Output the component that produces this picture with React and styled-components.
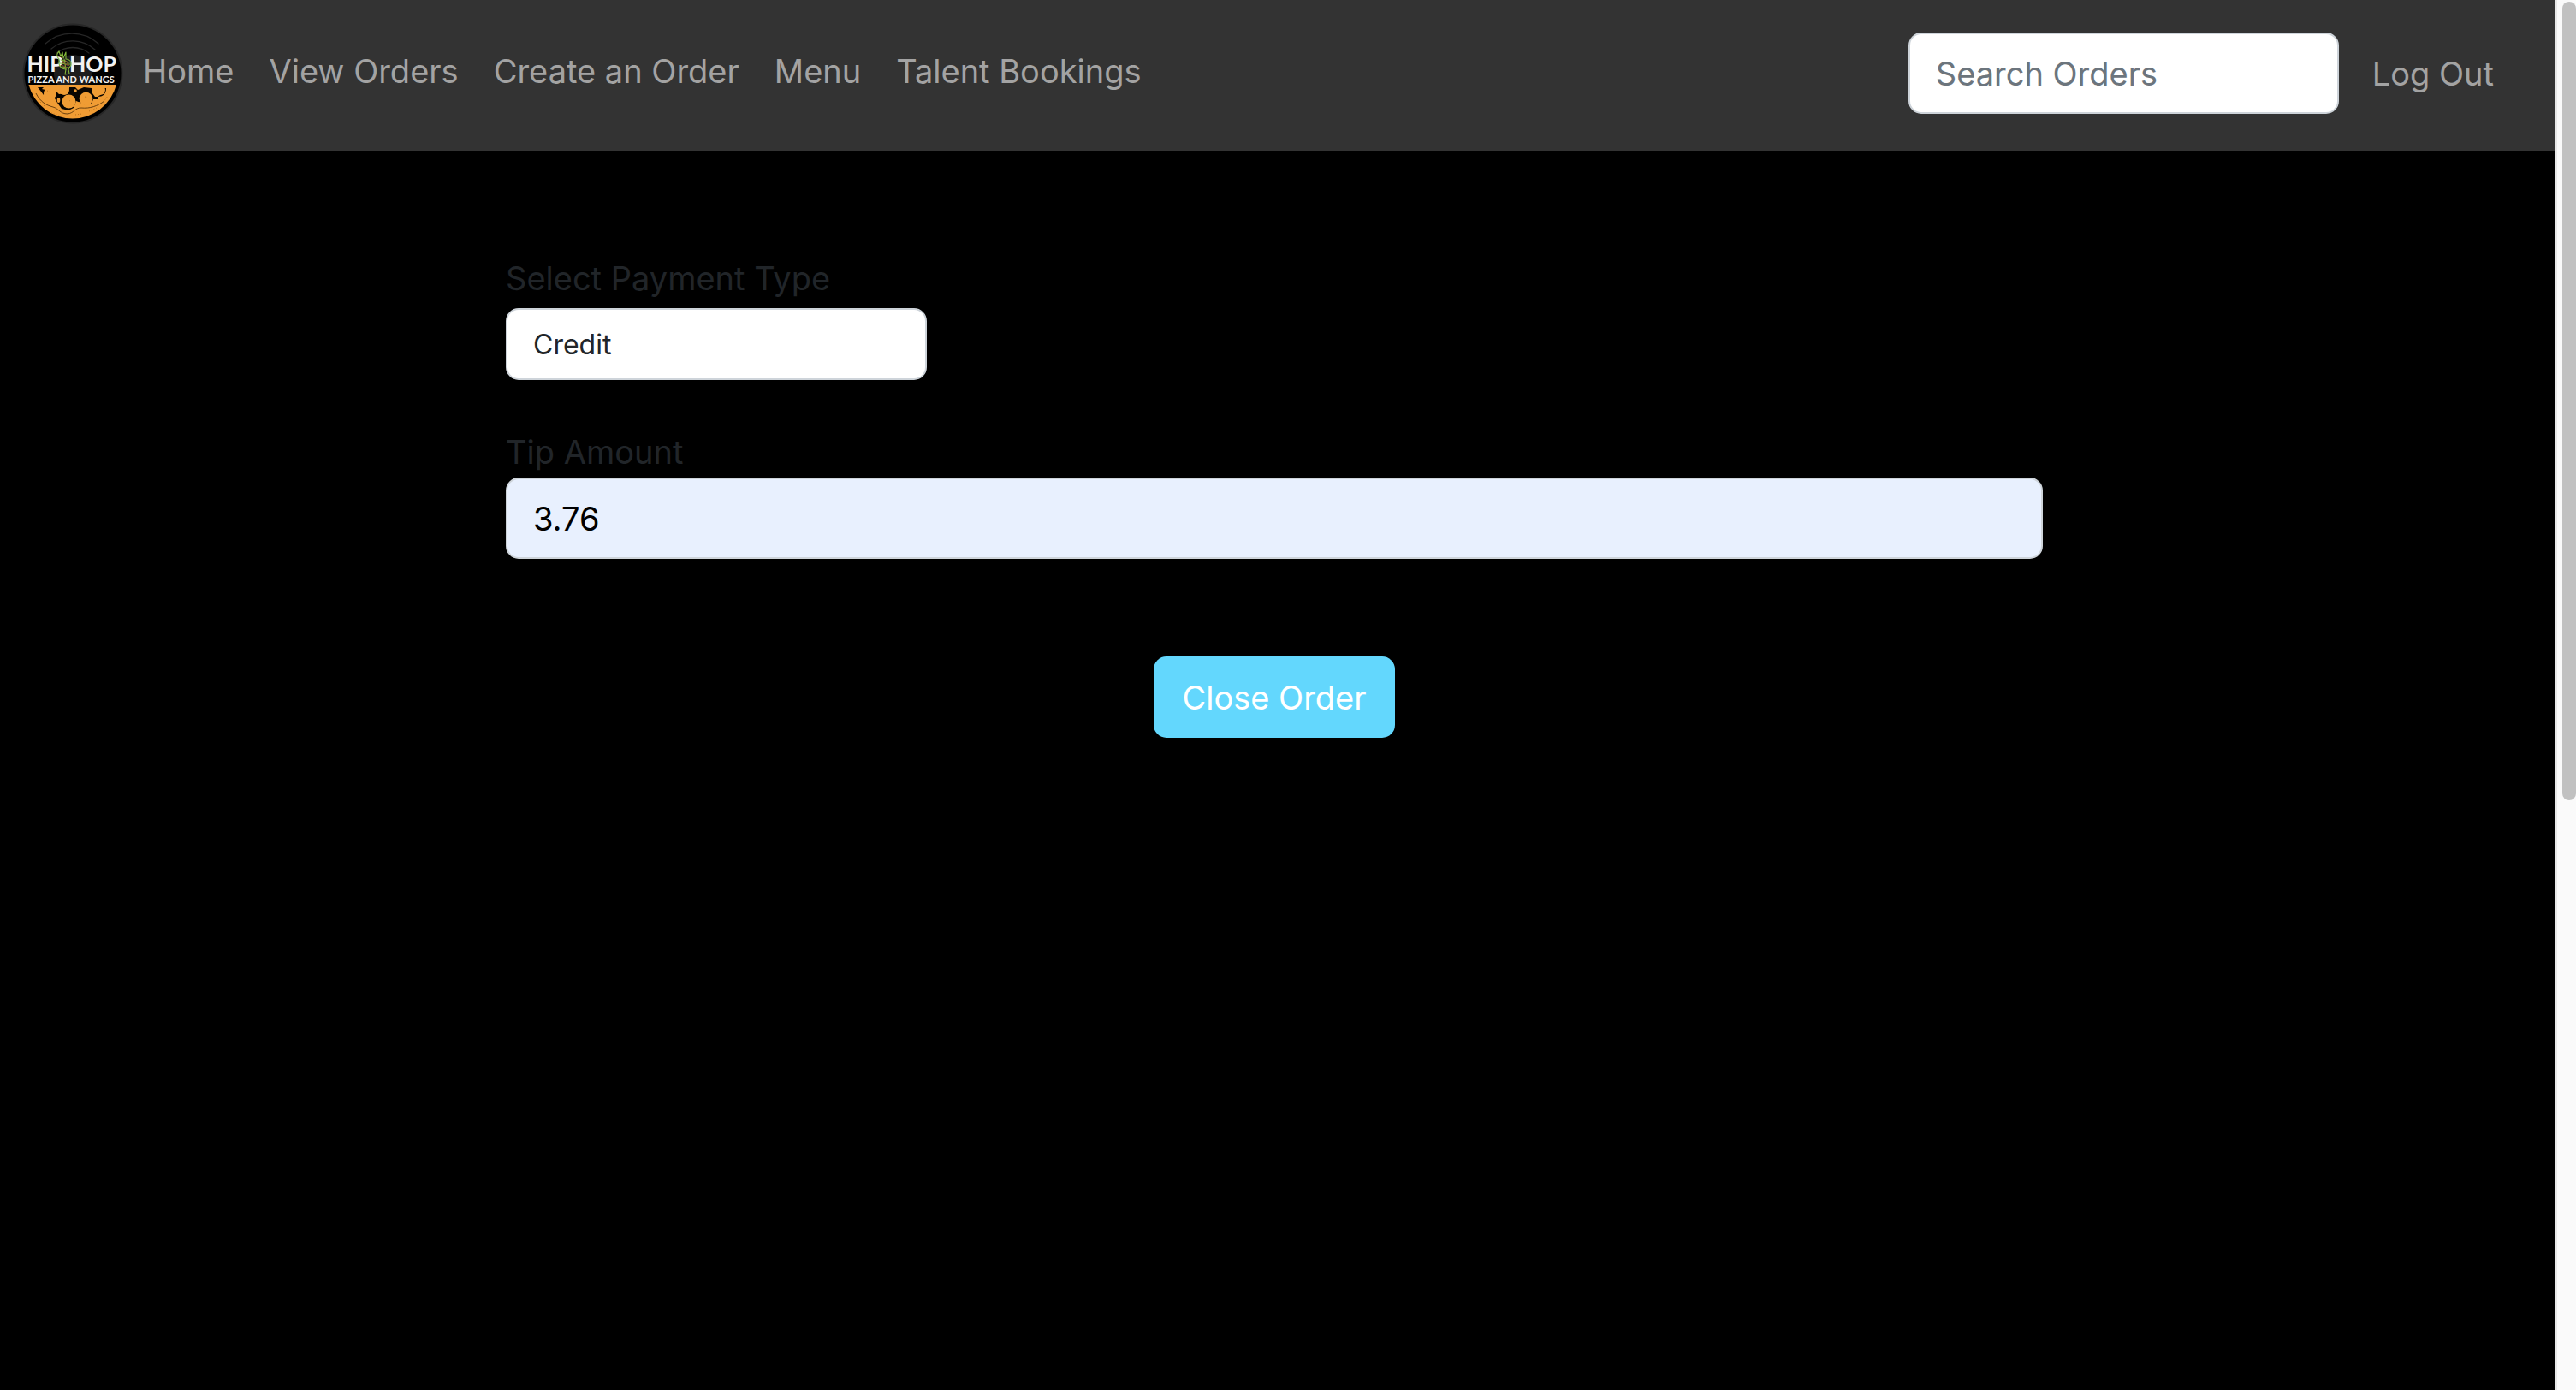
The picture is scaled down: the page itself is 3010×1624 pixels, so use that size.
import React, { useState } from "react";
import styled, { createGlobalStyle } from "styled-components";

const GlobalStyle = createGlobalStyle`
  *, *::before, *::after { box-sizing: border-box; }
  body {
    margin: 0;
    background: #000;
    color: #212529;
    font-family: Inter, "Liberation Sans", sans-serif;
    font-size: 38px;
    line-height: 56px;
  }
`;

const Window = styled.div`
  display: flex;
  height: 100vh;
`;

const Page = styled.div`
  flex: 1;
  min-width: 0;
  overflow: hidden;
`;

const ScrollTrack = styled.div`
  width: 24px;
  padding: 2px 0 0 6px;
  background: #fafafa;
  border-left: 2px solid #e8e8e8;
`;

const ScrollThumb = styled.div`
  height: 57.5%;
  border-radius: 8px;
  background: #c1c1c1;
`;

const Navbar = styled.header`
  display: flex;
  align-items: center;
  padding: 27px 72px 31px 26px;
  background: #333;
`;

const Brand = styled.a`
  display: block;
  width: 118px;
  height: 118px;
  margin-right: 23px;
`;

const NavLinks = styled.nav`
  display: flex;
  gap: 41px;
  padding-bottom: 6px;
`;

const NavLink = styled.a`
  color: #a3a3a3;
  text-decoration: none;
  white-space: nowrap;
`;

const NavActions = styled.div`
  display: flex;
  align-items: center;
  gap: 39px;
  margin-left: auto;
  padding-bottom: 1px;
`;

const LinkButton = styled.button`
  padding: 0;
  border: 0;
  background: none;
  color: #a3a3a3;
  font: inherit;
  white-space: nowrap;
  cursor: pointer;
`;

const TextInput = styled.input`
  display: block;
  width: ${(p) => p.$width || "100%"};
  height: 95px;
  padding: 0 30px;
  border: 2px solid #ced4da;
  border-radius: 15px;
  background: ${(p) => (p.$filled ? "#e8f0fe" : "#fff")};
  color: #000;
  font: inherit;

  &::placeholder {
    color: #6c757d;
    opacity: 1;
  }
`;

const Select = styled.select`
  display: block;
  appearance: none;
  width: 492px;
  max-width: 100%;
  height: 84px;
  padding: 0 30px;
  border: 2px solid #ced4da;
  border-radius: 15px;
  background: #fff;
  color: #212529;
  font-family: inherit;
  font-size: 32px;
`;

const Main = styled.main`
  display: grid;
  grid-template-columns: 591fr 1796fr 599fr;
  padding-top: 121px;
`;

const OrderForm = styled.form`
  grid-column: 2;
  display: flex;
  flex-direction: column;
  gap: 56px;
`;

const Field = styled.div`
  display: flex;
  flex-direction: column;
  gap: ${(p) => p.$gap}px;
`;

const SubmitButton = styled.button`
  align-self: center;
  min-width: 282px;
  height: 95px;
  margin-top: 58px;
  padding: 0 30px;
  border: 0;
  border-radius: 15px;
  background: #63d7fd;
  color: #fff;
  font: inherit;
  cursor: pointer;
`;

const LogoArt = styled.svg`
  display: block;
  width: 100%;
  height: 100%;

  text {
    font-family: Lato, sans-serif;
    font-weight: 700;
    fill: #f2f2f2;
  }
`;

function Logo() {
  return (
    <LogoArt viewBox="26 27 118 118" role="img" aria-label="Hip Hop Pizza and Wangs">
      <circle cx="85" cy="86" r="58.5" fill="#272727" />
      <circle cx="85" cy="86" r="56.5" fill="#000" />
      <g fill="none" stroke="#262626" strokeWidth="1.3" strokeLinecap="round">
        <path d="M53 51a46.500 46.500 0 0 1 62 0" />
        <path d="M60 57a38.500 38.500 0 0 1 51 1" />
        <path d="M66 62a31 31 0 0 1 38 0" />
      </g>
      <circle cx="85" cy="86" r="22" fill="#1d1d1d" />
      <text x="31.500" y="84" fontSize="25">HIP</text>
      <text x="136" y="84" fontSize="25" textAnchor="end">HOP</text>
      <text x="32.500" y="97" fontSize="11">PIZZA AND WANGS</text>
      <g fill="none" stroke="#84b83a" strokeWidth="1.1" strokeLinecap="round" strokeLinejoin="round">
        <path d="M69 69c-3-3-3-6 0-9l2 6 2-5 1 7 3-7 0 8c4 0 7 3 6 7l-3 5 1 5-5 1 1-6c-4 0-8-3-8-7z" />
        <path d="M71 70l10 3M70 74l12 1M72 78l9 1M75 69l2 12" />
      </g>
      <path d="M72 72l8 5M72 76l8 4M76 70l5 7" fill="none" stroke="#9c4c2c" strokeWidth="0.8" />
      <path d="M33.500 99h102.500a53 53 0 0 1-102.500 0z" fill="#f09c34" />
      <g fill="#0a0500">
        <path d="M44 102l7 0-2 2 4 1-2 6-3-4z" />
        <path d="M66 107l3 3 9-1 3-6 0-1 7 0 3 3 7-3 9 1 1 6 3 4 4 0-1 3-5 0-2 5-4-1-3 3-6-3-5-2-3 8-6 3-8-2-5-7-3-5-5-2 6-3z" />
        <path d="M124 103c0 7-4 10-10 10 4-3 7-3 8-10z" />
      </g>
      <g fill="#f09c34">
        <circle cx="58.500" cy="109" r="7.500" />
        <circle cx="75" cy="105" r="6" />
        <circle cx="80.500" cy="118.500" r="8" />
        <circle cx="100.500" cy="115.500" r="7.800" />
        <circle cx="117" cy="105" r="6" />
        <circle cx="92.500" cy="121" r="1.800" />
        <circle cx="88" cy="106" r="1.800" />
        <ellipse cx="68.500" cy="117" rx="1.800" ry="3" />
      </g>
      <path d="M42 109c5 10 12 14 20 16 7 2 8 8 17 8 8-1 8-7 16-7 10 1 19-2 27-8" fill="none" stroke="#5b360a" strokeWidth="0.9" />
      <path d="M47 119l6 6M60 132l9 3M88 134l8-1M104 130l9-4M121 119l5-7M55 106l3 1M79 116l3 2M99 113l3 1" fill="none" stroke="#a96414" strokeWidth="0.8" strokeDasharray="1 2" />
    </LogoArt>
  );
}

const links = ["Home", "View Orders", "Create an Order", "Menu", "Talent Bookings"];

export default function App() {
  const [query, setQuery] = useState("");
  const [payment, setPayment] = useState("credit");
  const [tip, setTip] = useState("3.76");

  return (
    <>
      <GlobalStyle />
      <Window>
        <Page>
          <Navbar>
            <Brand href="#"><Logo /></Brand>
            <NavLinks>
              {links.map((label) => (
                <NavLink key={label} href="#">{label}</NavLink>
              ))}
            </NavLinks>
            <NavActions>
              <TextInput
                $width="503px"
                type="text"
                aria-label="Search Orders"
                placeholder="Search Orders"
                value={query}
                onChange={(e) => setQuery(e.target.value)}
              />
              <LinkButton type="button">Log Out</LinkButton>
            </NavActions>
          </Navbar>
          <Main>
            <OrderForm onSubmit={(e) => e.preventDefault()}>
              <Field $gap={7}>
                <label htmlFor="payment">Select Payment Type</label>
                <Select id="payment" value={payment} onChange={(e) => setPayment(e.target.value)}>
                  <option value="credit">Credit</option>
                </Select>
              </Field>
              <Field $gap={2}>
                <label htmlFor="tip">Tip Amount</label>
                <TextInput
                  id="tip"
                  $filled
                  type="text"
                  inputMode="decimal"
                  value={tip}
                  onChange={(e) => setTip(e.target.value)}
                />
              </Field>
              <SubmitButton type="submit">Close Order</SubmitButton>
            </OrderForm>
          </Main>
        </Page>
        <ScrollTrack aria-hidden="true">
          <ScrollThumb />
        </ScrollTrack>
      </Window>
    </>
  );
}
